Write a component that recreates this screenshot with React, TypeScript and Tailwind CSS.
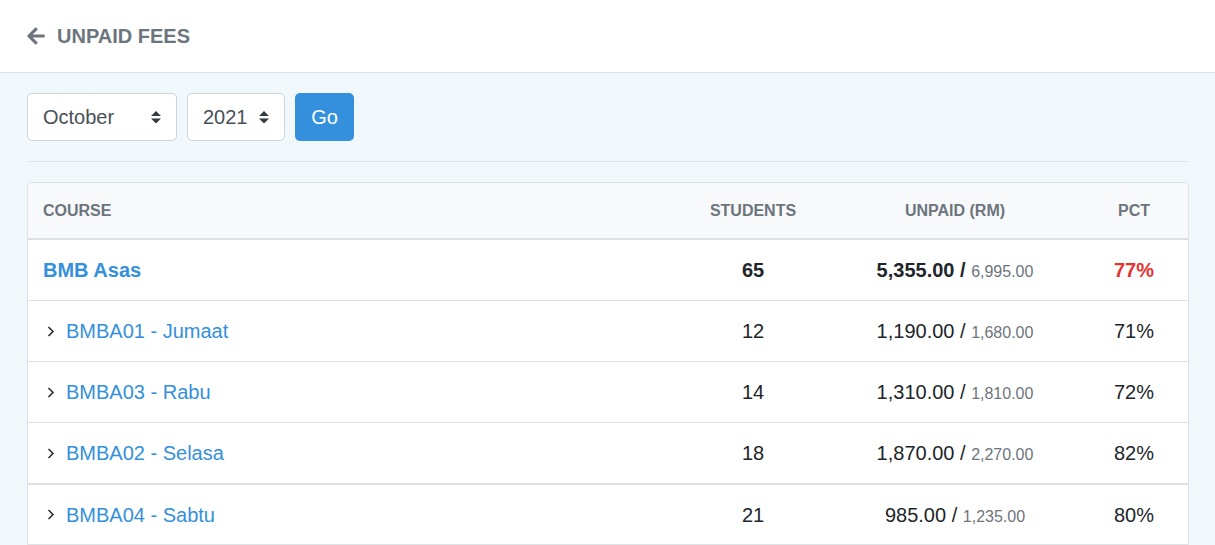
import React from "react";

const rows = [
  { name: "BMBA01 - Jumaat", students: 12, unpaid: "1,190.00", total: "1,680.00", pct: "71%" },
  { name: "BMBA03 - Rabu", students: 14, unpaid: "1,310.00", total: "1,810.00", pct: "72%" },
  { name: "BMBA02 - Selasa", students: 18, unpaid: "1,870.00", total: "2,270.00", pct: "82%" },
];

const SelectArrows = () => (
  <svg width="10" height="12.5" viewBox="0 0 4 5" className="shrink-0">
    <path d="M2 0L0 2h4zm0 5L0 3h4z" fill="#343a40" />
  </svg>
);

const Chevron = () => (
  <svg width="8" height="11" viewBox="0 0 8 11" className="shrink-0">
    <path d="M1.5 1L6 5.5L1.5 10" fill="none" stroke="#212529" strokeWidth="1.5" />
  </svg>
);

const gridCols = "grid grid-cols-[648px_154px_250px_108px]";

function Row({ r, thickTop }: { r: (typeof rows)[number]; thickTop?: boolean }) {
  return (
    <div
      className={`${gridCols} h-[61px] items-center ${thickTop ? "border-t-2" : "border-t"} border-[#dee2e6] text-[20px] text-[#212529]`}
    >
      <div className="flex items-center pl-[19px] gap-[11px]">
        <Chevron />
        <span className="text-[#3490dc]">{r.name}</span>
      </div>
      <div className="text-center">{r.students}</div>
      <div className="text-center">
        {r.unpaid} / <span className="text-[16px] text-[#6c757d]">{r.total}</span>
      </div>
      <div className="text-center">{r.pct}</div>
    </div>
  );
}

export default function App() {
  return (
    <div
      className="min-h-[545px] bg-[#f1f8fb]"
      style={{ fontFamily: '"Liberation Sans", Arial, sans-serif' }}
    >
      <div className="h-[73px] bg-white border-b border-[#dee2e6] flex items-center pl-[27px] pb-[1px]">
        <svg width="18" height="20" viewBox="0 0 448 512" className="mr-[12px]">
          <path
            fill="#6c757d"
            d="M257.5 445.1l-22.2 22.2c-9.4 9.4-24.6 9.4-33.9 0L7 273c-9.4-9.4-9.4-24.6 0-33.9L201.4 44.7c9.4-9.4 24.6-9.4 33.9 0l22.2 22.2c9.5 9.5 9.3 25-.4 34.3L136.6 216H424c13.3 0 24 10.7 24 24v32c0 13.3-10.7 24-24 24H136.6l120.5 114.8c9.8 9.3 10 24.8.4 34.3z"
          />
        </svg>
        <span className="text-[20px] font-bold text-[#6c757d]">UNPAID FEES</span>
      </div>

      <div className="px-[27px] pt-[20px]">
        <div className="flex gap-[10px]">
          <div className="w-[150px] h-[48px] bg-white border border-[#ced4da] rounded-[5px] flex items-center justify-between pl-[15px] pr-[15px] text-[20px] text-[#495057]">
            <span>October</span>
            <SelectArrows />
          </div>
          <div className="w-[98px] h-[48px] bg-white border border-[#ced4da] rounded-[5px] flex items-center justify-between pl-[15px] pr-[15px] text-[20px] text-[#495057]">
            <span>2021</span>
            <SelectArrows />
          </div>
          <div className="w-[59px] h-[48px] bg-[#3490dc] rounded-[5px] flex items-center justify-center text-[20px] text-white">
            Go
          </div>
        </div>

        <div className="mt-[20px] border-t border-[#dde4e8] w-[1162px]" />

        <div className="mt-[20px] w-[1162px] border border-[#dee2e6] rounded-t-[5px] bg-white overflow-hidden">
          <div className={`${gridCols} h-[55px] items-center bg-[#f8f9fa] text-[16px] font-bold text-[#6c757d]`}>
            <div className="pl-[15px]">COURSE</div>
            <div className="text-center">STUDENTS</div>
            <div className="text-center">UNPAID (RM)</div>
            <div className="text-center">PCT</div>
          </div>
          <div className={`${gridCols} h-[62px] items-center border-t-2 border-[#dee2e6] text-[20px] text-[#212529] font-bold`}>
            <div className="pl-[15px] text-[#3490dc]">BMB Asas</div>
            <div className="text-center">65</div>
            <div className="text-center">
              5,355.00 / <span className="text-[16px] font-normal text-[#6c757d]">6,995.00</span>
            </div>
            <div className="text-center text-[#e3342f]">77%</div>
          </div>
          {rows.map((r) => (
            <Row key={r.name} r={r} />
          ))}
          <Row
            r={{ name: "BMBA04 - Sabtu", students: 21, unpaid: "985.00", total: "1,235.00", pct: "80%" }}
            thickTop
          />
        </div>
      </div>
    </div>
  );
}
